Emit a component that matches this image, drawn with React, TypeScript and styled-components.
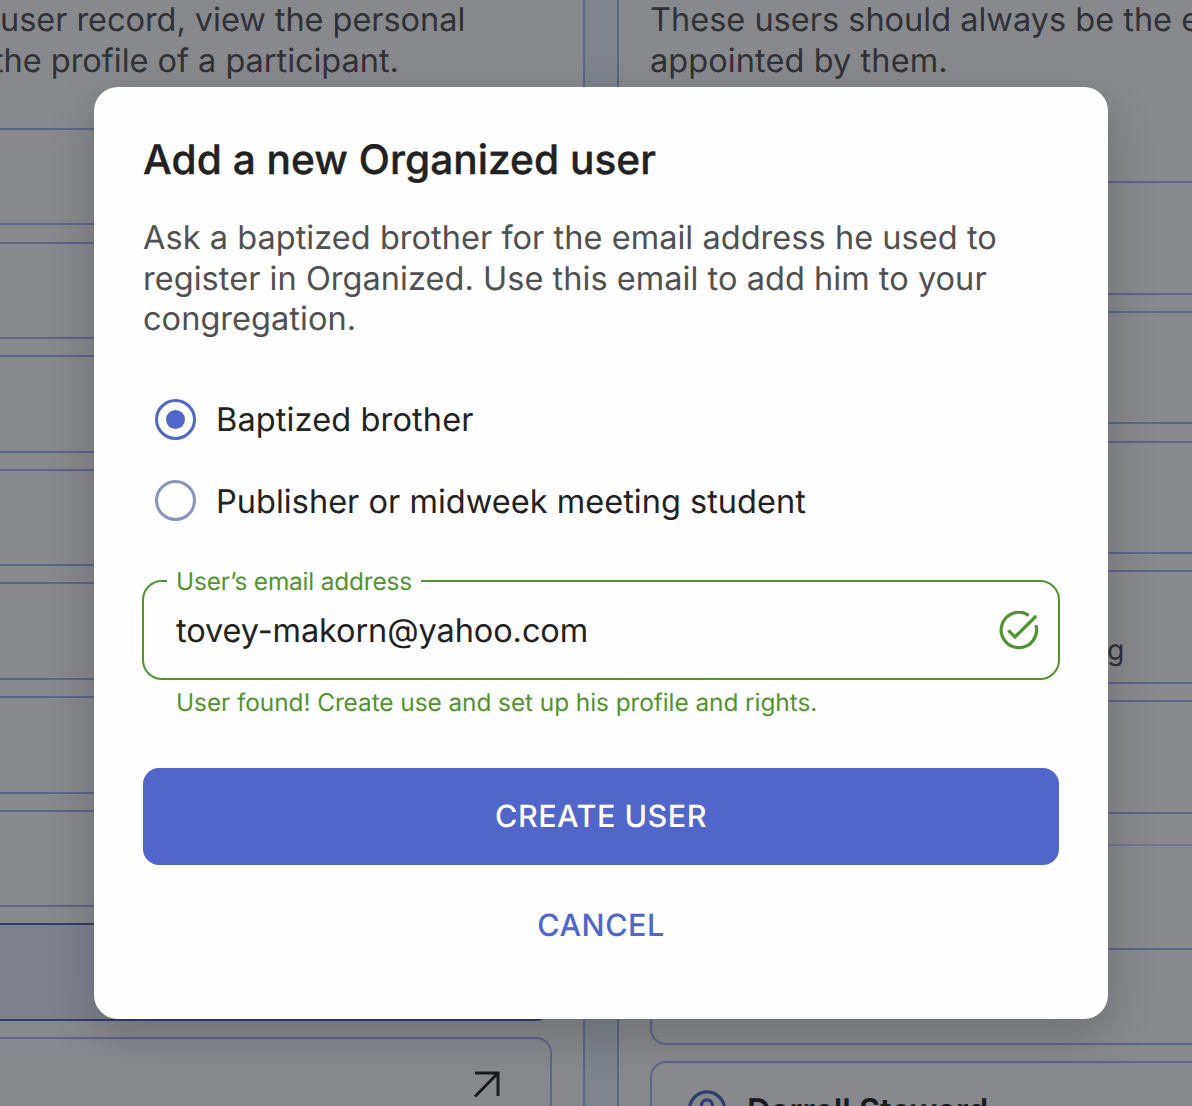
import React from "react";
import styled, { createGlobalStyle } from "styled-components";

const GlobalStyle = createGlobalStyle`
  * { box-sizing: border-box; }
  body {
    margin: 0;
    overflow: hidden;
    background: #ecf2fd;
    font-family: Inter, "Liberation Sans", sans-serif;
    text-rendering: geometricPrecision;
    color: #222222;
  }
`;

const Page = styled.main`
  position: relative;
  display: flex;
  gap: 32px;
  width: 1192px;
  height: 1106px;
  overflow: hidden;
`;

const Panel = styled.section<{ $side: "left" | "right" }>`
  flex: none;
  display: flex;
  flex-direction: column;
  width: ${(p) => (p.$side === "left" ? 585 : 640)}px;
  height: 1200px;
  background: #ffffff;
  border: 0 solid #aab8f4;
  ${(p) =>
    p.$side === "left"
      ? "border-right-width: 2px; padding-right: 31px;"
      : "border-left-width: 2px; padding-left: 31px;"}
`;

const Intro = styled.div<{ $gap: number }>`
  font-size: 32.5px;
  line-height: 40.6px;
  white-space: nowrap;
  color: #505050;
  margin-bottom: ${(p) => p.$gap}px;
`;

const IntroLine = styled.div<{ $shift?: number; $tracking?: number }>`
  margin-left: ${(p) => p.$shift ?? 0}px;
  letter-spacing: ${(p) => p.$tracking ?? 0}px;
`;

const CardList = styled.div<{ $bleed: "left" | "right" }>`
  display: flex;
  flex-direction: column;
  gap: 16.2px;
  ${(p) => (p.$bleed === "left" ? "margin-left: -24px;" : "margin-right: -24px;")}
`;

const Card = styled.div<{ $height: number; $active?: boolean }>`
  flex: none;
  display: flex;
  align-items: center;
  height: ${(p) => p.$height}px;
  border: 2px solid ${(p) => (p.$active ? "#5066c8" : "#aab8f4")};
  border-radius: 16px;
  background: ${(p) => (p.$active ? "#eaedff" : "#ffffff")};
`;

const OpenCard = styled(Card)`
  justify-content: flex-end;
  padding: 0 50px 2px 0;
`;

const PersonCard = styled(Card)`
  gap: 20px;
  padding-left: 35px;
  font-size: 32.5px;
  font-weight: 600;
`;

const NoteCard = styled(Card)`
  padding: 45px 0 0 455px;
  font-size: 28.4px;
  color: #505050;
`;

const Divider = styled.hr`
  flex: none;
  width: 100%;
  height: 2px;
  margin: 30px 0 102px;
  border: 0;
  background: #cbd6fa;
`;

const Overlay = styled.div`
  position: absolute;
  inset: 0;
  display: flex;
  align-items: flex-start;
  padding: 87px 0 0 94px;
  background: rgba(18, 19, 26, 0.5);
`;

const Dialog = styled.div`
  display: flex;
  flex-direction: column;
  width: 1014px;
  height: 932px;
  padding: 48.5px 49px 40px;
  border-radius: 24px;
  background: #fefefe;
  box-shadow: 0 16px 48px rgba(10, 10, 15, 0.2);
`;

const Title = styled.h2`
  margin: 0 0 34px;
  font-size: 40.6px;
  line-height: 48.7px;
  font-weight: 500;
  letter-spacing: 0.05px;
  -webkit-text-stroke: 0.4px #222222;
`;

const Description = styled.p`
  margin: 0;
  font-size: 32.5px;
  line-height: 40.6px;
  letter-spacing: 0.04px;
  white-space: nowrap;
  color: #505050;
`;

const RadioGroup = styled.div`
  display: flex;
  flex-direction: column;
  gap: 40.6px;
  margin: 59px 0 0 12px;
`;

const RadioRow = styled.label<{ $tracking: number }>`
  display: flex;
  align-items: center;
  gap: 20px;
  height: 40.6px;
  font-size: 32.5px;
  line-height: 40.6px;
  letter-spacing: ${(p) => p.$tracking}px;
  white-space: nowrap;
`;

const RadioText = styled.span`
  padding-top: 3px;
`;

const RadioMark = styled.span<{ $checked?: boolean }>`
  display: flex;
  align-items: center;
  justify-content: center;
  width: 41px;
  height: 41px;
  border: 3px solid ${(p) => (p.$checked ? "#5066c8" : "#8794c0")};
  border-radius: 50%;
  &::after {
    content: "";
    width: 19px;
    height: 19px;
    border-radius: 50%;
    background: ${(p) => (p.$checked ? "#5066c8" : "transparent")};
  }
`;

const Field = styled.fieldset`
  flex: none;
  display: flex;
  align-items: flex-start;
  justify-content: space-between;
  height: 115px;
  margin: 44px -1px 0;
  padding: 14px 19px 0 32px;
  border: 2px solid #519330;
  border-radius: 20px;
`;

const FieldLabel = styled.legend`
  margin-left: -9px;
  padding: 0 9px;
  font-size: 24.4px;
  line-height: 32px;
  letter-spacing: -0.17px;
  color: #519330;
`;

const FieldValue = styled.span`
  font-size: 32.5px;
  line-height: 40.6px;
  letter-spacing: -0.09px;
`;

const Helper = styled.div`
  margin: 6.5px 0 0 33px;
  font-size: 24.4px;
  line-height: 32px;
  letter-spacing: -0.06px;
  white-space: nowrap;
  color: #519330;
`;

const Button = styled.button<{ $primary?: boolean }>`
  flex: none;
  height: 97px;
  margin: ${(p) => (p.$primary ? "50px 0 12px" : "0")};
  padding: 1px 0 0;
  border: 0;
  border-radius: 16px;
  background: ${(p) => (p.$primary ? "#5266c9" : "transparent")};
  color: ${(p) => (p.$primary ? "#ffffff" : "#5066c8")};
  font: 500 30.5px/40px Inter, "Liberation Sans", sans-serif;
  letter-spacing: 0.5px;
  text-rendering: geometricPrecision;
`;

const ArrowIcon = () => (
  <svg width="26" height="27" viewBox="0 0 26 27" fill="none" stroke="#222222" strokeWidth="3">
    <path d="M1 2H24V25M24 2L1 25.5" />
  </svg>
);

const PersonIcon = () => (
  <svg width="40" height="40" viewBox="0 0 40 40" fill="none" stroke="#5066c8" strokeWidth="3.2">
    <circle cx="20" cy="19.5" r="17.6" />
    <circle cx="20" cy="15.2" r="5.4" />
    <path d="M8 32C14 26 26 26 32 32" />
  </svg>
);

const FoundIcon = () => (
  <svg width="40" height="42" viewBox="0 -1 40 42" fill="none" stroke="#519330" strokeWidth="3.2">
    <path d="M29.8 3.3A17.7 17.7 0 1 0 36.9 13.1" />
    <path d="M9.3 18.3L16 25L37.2 4" />
  </svg>
);

export default function App() {
  return (
    <>
      <GlobalStyle />
      <Page>
        <Panel $side="left">
          <Intro $gap={46.8}>
            <IntroLine $tracking={-0.05}>user record, view the personal</IntroLine>
            <IntroLine $shift={-7} $tracking={-0.03}>the profile of a participant.</IntroLine>
          </Intro>
          <CardList $bleed="left">
            {[0, 1, 2, 3, 4, 5, 6].map((n) => (
              <Card key={n} $height={97.45} />
            ))}
            <Card $height={97.45} $active />
            <OpenCard $height={97.45}>
              <ArrowIcon />
            </OpenCard>
          </CardList>
        </Panel>
        <Panel $side="right">
          <Intro $gap={99.8}>
            <IntroLine>These users should always be the e</IntroLine>
            <IntroLine $tracking={0.08}>appointed by them.</IntroLine>
          </Intro>
          <CardList $bleed="right">
            <Card $height={113.6} />
            <Card $height={113.6} />
            <Card $height={113.6} />
            <NoteCard $height={113.6}>g</NoteCard>
            <Card $height={113.6} />
          </CardList>
          <Divider />
          <CardList $bleed="right">
            <Card $height={97.45} />
            <PersonCard $height={97.45}>
              <PersonIcon />
              Darrell Steward
            </PersonCard>
          </CardList>
        </Panel>
        <Overlay>
          <Dialog role="dialog">
            <Title>Add a new Organized user</Title>
            <Description>
              Ask a baptized brother for the email address he used to
              <br />
              register in Organized. Use this email to add him to your
              <br />
              congregation.
            </Description>
            <RadioGroup>
              <RadioRow $tracking={0.13}>
                <RadioMark $checked />
                <RadioText>Baptized brother</RadioText>
              </RadioRow>
              <RadioRow $tracking={0.02}>
                <RadioMark />
                <RadioText>Publisher or midweek meeting student</RadioText>
              </RadioRow>
            </RadioGroup>
            <Field>
              <FieldLabel>User’s email address</FieldLabel>
              <FieldValue>tovey-makorn@yahoo.com</FieldValue>
              <FoundIcon />
            </Field>
            <Helper>User found! Create use and set up his profile and rights.</Helper>
            <Button $primary>CREATE USER</Button>
            <Button>CANCEL</Button>
          </Dialog>
        </Overlay>
      </Page>
    </>
  );
}
